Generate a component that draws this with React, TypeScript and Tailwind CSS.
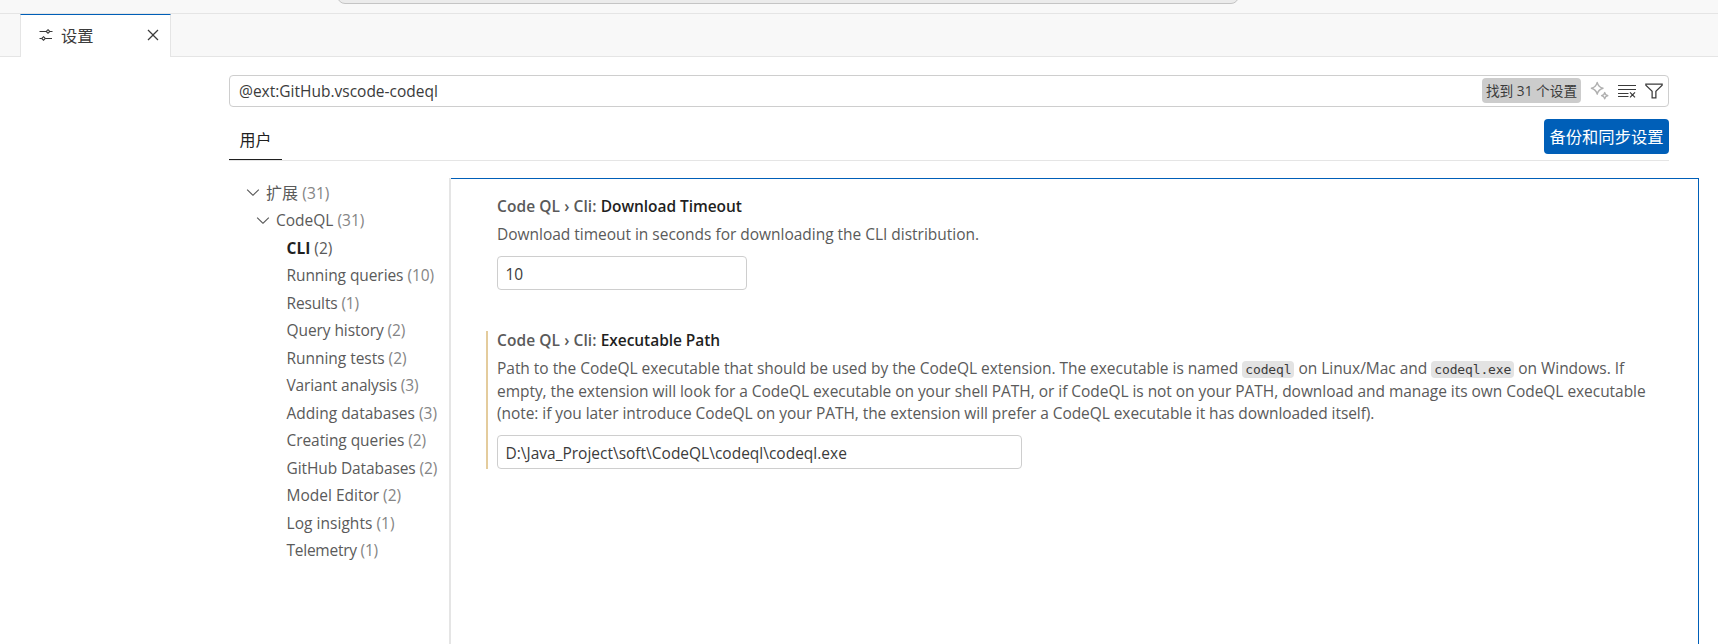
import React from 'react';
import { VscChevronDown, VscClose, VscFilter } from 'react-icons/vsc';

const tree = [
  { label: 'CLI', count: 2, ls: 'tracking-[0px]' },
  { label: 'Running queries', count: 10, ls: 'tracking-[-0.07px]' },
  { label: 'Results', count: 1, ls: 'tracking-[-0.14px]' },
  { label: 'Query history', count: 2, ls: 'tracking-[-0.08px]' },
  { label: 'Running tests', count: 2, ls: 'tracking-[-0.03px]' },
  { label: 'Variant analysis', count: 3, ls: 'tracking-[-0.15px]' },
  { label: 'Adding databases', count: 3, ls: 'tracking-[0px]' },
  { label: 'Creating queries', count: 2, ls: 'tracking-[-0.07px]' },
  { label: 'GitHub Databases', count: 2, ls: 'tracking-[-0.1px]' },
  { label: 'Model Editor', count: 2, ls: 'tracking-[0px]' },
  { label: 'Log insights', count: 1, ls: 'tracking-[0.04px]' },
  { label: 'Telemetry', count: 1, ls: 'tracking-[-0.25px]' },
];

function SlidersIcon() {
  return (
    <svg viewBox="0 0 14 14" className="size-3.5" fill="none" stroke="currentColor" strokeWidth="1.1">
      <path d="M.5 3.5h6.7M10.8 3.5h2.7M.5 10.5h2.2M6.3 10.5h6.7" />
      <path d="M9 1.7l1.8 1.8L9 5.3 7.2 3.5zM4.5 8.7l1.8 1.8-1.8 1.8-1.8-1.8z" />
    </svg>
  );
}

function SparkleIcon() {
  return (
    <svg viewBox="0 0 20 20" className="ml-2 size-5 text-[#b0b0b0]" fill="none" stroke="currentColor" strokeWidth="1.4" strokeLinejoin="round">
      <path d="M8.2 1.4Q9.4 6.1 14 7.3 9.4 8.5 8.2 13.2 7 8.5 2.4 7.3 7 6.1 8.2 1.4z" />
      <path d="M15.7 11.6l1 2.1 2.1 1-2.1 1-1 2.1-1-2.1-2.1-1 2.1-1z" />
    </svg>
  );
}

function ClearIcon() {
  return (
    <svg viewBox="0 0 20 20" className="ml-2 size-5" fill="none" stroke="currentColor" strokeWidth="1.2">
      <path d="M1 4.5h18M1 8.5h18M1 12.5h10.5M1 15.5h10.5M13 11.3l5 5M18 11.3l-5 5" />
    </svg>
  );
}

function Count({ n }: { n: number }) {
  return <span className="text-[#858585]"> ({n})</span>;
}

function Code({ children }: { children: string }) {
  return (
    <code className="rounded bg-[#e3e3e3] px-[3px] py-px font-['DejaVu_Sans_Mono',monospace] text-[13px] leading-4 tracking-[-0.13px] text-[#3b3b3b]">
      {children}
    </code>
  );
}

function Heading({ name }: { name: string }) {
  return (
    <h3 className="h-6 whitespace-nowrap pt-px font-semibold leading-6 text-[#1f1f1f]">
      <span className="tracking-[0.08px] text-[#5a5a5a]">Code QL › Cli: </span>
      <span className="tracking-[-0.05px]">{name}</span>
    </h3>
  );
}

export default function App() {
  return (
    <div className="flex h-[644px] w-[1718px] flex-col overflow-hidden bg-white font-['Open_Sans','Noto_Sans_CJK_SC',sans-serif] text-[15.5px] text-[#3b3b3b]">
      <div className="flex h-3.5 shrink-0 border-b border-[#e5e5e5] bg-[#f8f8f8] pl-[337px]">
        <div className="h-1 w-[902px] overflow-hidden">
          <div className="-mt-5 h-6 rounded-[8px] border border-[#c4c4c4] bg-[#ebebeb]" />
        </div>
      </div>

      <div className="flex h-[43px] shrink-0 bg-[#f8f8f8]">
        <div className="w-5 border-b border-[#e5e5e5]" />
        <div className="flex w-[151px] items-center border-x border-t border-x-[#e5e5e5] border-t-[#005fb8] bg-white pb-[2px] pl-[18px]">
          <SlidersIcon />
          <span className="ml-[8px] pt-0.5 text-[16.3px] leading-5">设置</span>
          <VscClose className="ml-auto mr-[7px] size-5" />
        </div>
        <div className="grow border-b border-[#e5e5e5]" />
      </div>

      <div className="ml-[229px] mt-[18px] flex h-8 w-[1440px] shrink-0 items-center rounded-sm border border-[#cecece] pl-[9px] pr-1">
        <span className="pt-0.5">@ext:GitHub.vscode-codeql</span>
        <span className="mb-px ml-auto flex h-[25px] w-[99px] items-center justify-center rounded-sm bg-[#cccccc] pt-px text-[13.7px]">找到 31 个设置</span>
        <SparkleIcon />
        <ClearIcon />
        <VscFilter className="ml-[7px] size-5" />
      </div>

      <div className="ml-[229px] flex h-[54px] w-[1440px] shrink-0 items-end justify-between border-b border-[#e5e5e5]">
        <div className="flex h-[42px] w-[53px] items-center justify-center border-b border-[#1f1f1f] pt-0.5 text-[16px] text-[#1f1f1f]">用户</div>
        <button className="mb-1.5 flex h-[35px] w-[125px] items-center justify-center whitespace-nowrap rounded-sm bg-[#005fb8] pt-0.5 text-[16.3px] text-white">备份和同步设置</button>
      </div>

      <div className="mt-[17px] flex min-h-0 grow">
        <nav className="w-[449px] shrink-0 pt-[1.5px] leading-[27.5px]">
          <div className="flex h-[27.5px] items-center pl-[243px]">
            <VscChevronDown className="mb-0.5 mr-[3px] size-5 text-[#5a5a5a]" />
            <span className="whitespace-pre tracking-[0.08px] text-[#5a5a5a]"><span className="text-[16px]">扩展</span><Count n={31} /></span>
          </div>
          <div className="flex h-[27.5px] items-center pl-[253px]">
            <VscChevronDown className="mb-0.5 mr-[3px] size-5 text-[#5a5a5a]" />
            <span className="whitespace-pre text-[#5a5a5a]">CodeQL<Count n={31} /></span>
          </div>
          {tree.map((t, i) => (
            <div key={t.label} className="h-[27.5px] whitespace-pre pl-[286.5px]">
              <span className={t.ls}>
                <span className={i === 0 ? 'font-bold text-[#1f1f1f]' : 'text-[#5a5a5a]'}>{t.label}</span>
                {i === 0 ? <span className="text-[#5a5a5a]"> ({t.count})</span> : <Count n={t.count} />}
              </span>
            </div>
          ))}
        </nav>
        <div className="w-0.5 shrink-0 bg-[#e5e5e5]" />
        <main className="w-[1248px] border-r border-t border-[#005fb8] pl-[35px] pt-[14px]">
          <section className="pl-[11px]">
            <Heading name="Download Timeout" />
            <p className="mt-[5px] h-6 leading-6 tracking-[-0.02px] text-[#5a5a5a]">Download timeout in seconds for downloading the CLI distribution.</p>
            <div className="mt-2.5 flex h-[34px] w-[250px] items-center rounded-sm border border-[#cecece] pl-[7.5px] pt-1">10</div>
          </section>
          <section className="mt-[41px] flex h-[138px] flex-col border-l-2 border-[#e4cc9d] pl-[9px]">
            <div className="-mt-1"><Heading name="Executable Path" /></div>
            <p className="mt-1.5 whitespace-nowrap leading-[22.5px] text-[#5a5a5a]">
              <span className="block h-[22.5px] tracking-[-0.03px]">Path to the CodeQL executable that should be used by the CodeQL extension. The executable is named <Code>codeql</Code> on Linux/Mac and <Code>codeql.exe</Code> on Windows. If</span>
              <span className="block h-[22.5px] tracking-[-0.043px]">empty, the extension will look for a CodeQL executable on your shell PATH, or if CodeQL is not on your PATH, download and manage its own CodeQL executable</span>
              <span className="block h-[22.5px] tracking-[-0.06px]">(note: if you later introduce CodeQL on your PATH, the extension will prefer a CodeQL executable it has downloaded itself).</span>
            </p>
            <div className="mt-auto flex h-[34px] w-[525px] items-center rounded-sm border border-[#cecece] pl-[7.5px] pt-1">D:\Java_Project\soft\CodeQL\codeql\codeql.exe</div>
          </section>
        </main>
      </div>
    </div>
  );
}
